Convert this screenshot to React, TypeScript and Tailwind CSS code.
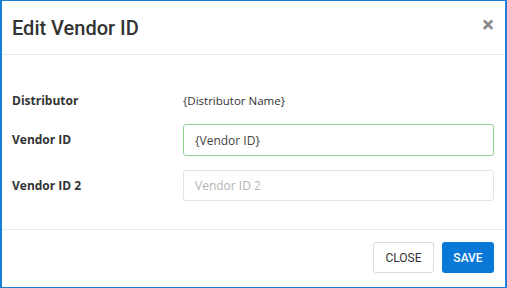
import React from "react";

export default function App() {
  return (
    <div className="h-[288px] w-[507px] bg-white font-['Roboto',sans-serif]">
      <div className="flex h-full flex-col border-x-2 border-y border-[#1a7fd8] bg-white">
        {/* header */}
        <div className="flex h-[54px] items-center justify-between border-b border-[#e9ecef] pl-[10px] pr-[11px]">
          <h2 className="text-[20px] font-medium leading-none text-[#333]">Edit Vendor ID</h2>
          <button className="pb-[6px] text-[22px] font-bold leading-none text-[#888]">×</button>
        </div>

        {/* body */}
        <div className="flex h-[175px] flex-col border-b border-[#e9ecef] pl-[10px] pr-[11px] pt-[37px] font-['Open_Sans',sans-serif]">
          <div className="flex items-center">
            <span className="w-[171px] text-[12px] font-bold text-[#333]">Distributor</span>
            <span className="text-[11.5px] text-[#333]">{"{Distributor Name}"}</span>
          </div>
          <div className="mt-[14px] flex items-center">
            <span className="w-[171px] text-[12px] font-bold text-[#333]">Vendor ID</span>
            <input
              className="h-[32px] flex-1 rounded-[3px] border border-[#8fd28f] px-[11px] text-[12px] text-[#444] outline-none"
              defaultValue="{Vendor ID}"
            />
          </div>
          <div className="mt-[14px] flex items-center">
            <span className="w-[171px] text-[12px] font-bold text-[#333]">Vendor ID 2</span>
            <input
              className="h-[31px] flex-1 rounded-[3px] border border-[#e3e3e3] px-[11px] text-[12px] text-[#444] placeholder:text-[#b5b5b5] outline-none"
              placeholder="Vendor ID 2"
            />
          </div>
        </div>

        {/* footer */}
        <div className="flex flex-1 items-center justify-end gap-[8px] pr-[11px] pb-[2px]">
          <button className="h-[31px] w-[61px] rounded-[3px] border border-[#dcdcdc] bg-white text-[12px] text-[#333]">
            CLOSE
          </button>
          <button className="h-[31px] w-[52px] rounded-[3px] bg-[#0a78d6] text-[12px] font-medium text-white">
            SAVE
          </button>
        </div>
      </div>
    </div>
  );
}
